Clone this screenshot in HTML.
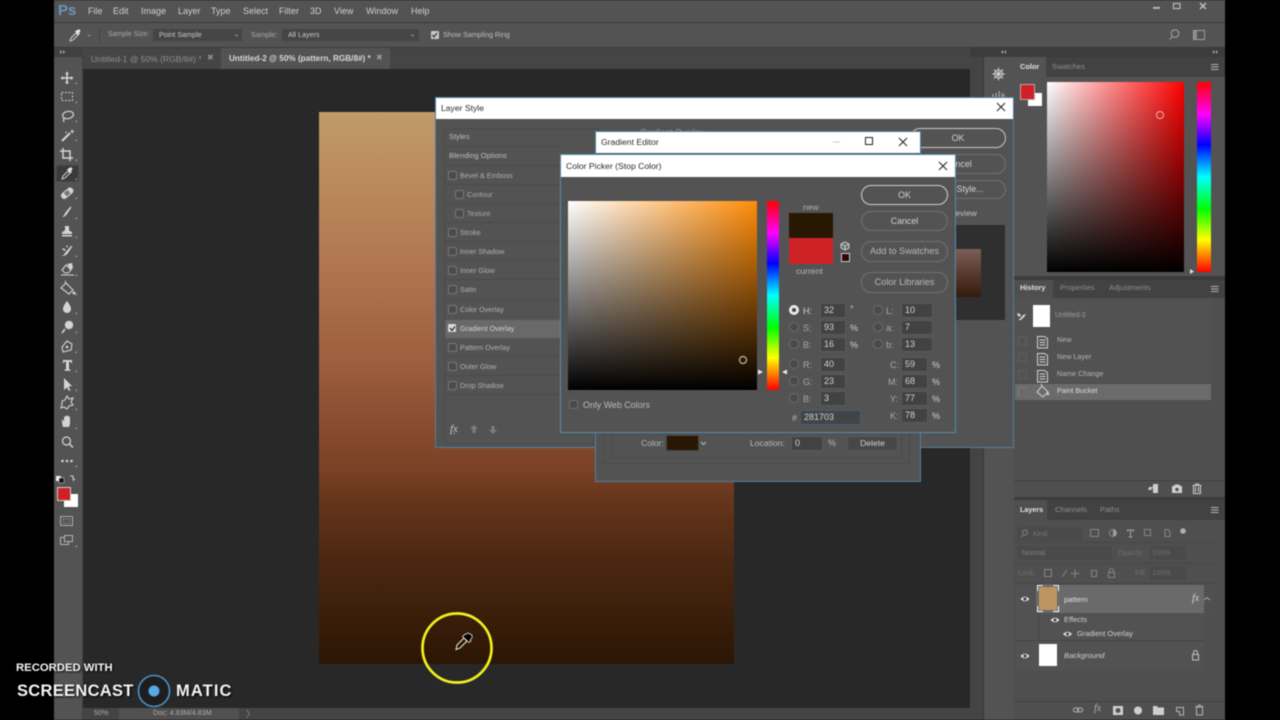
<!DOCTYPE html>
<html><head><meta charset="utf-8"><title>Photoshop</title>
<style>
html,body{margin:0;padding:0;width:1280px;height:720px;overflow:hidden;background:#000}
body{position:relative;font-family:"Liberation Sans",sans-serif;color:#c8c8c8}
div,span{position:absolute;box-sizing:border-box}
#root{left:0;top:0;width:1280px;height:720px;overflow:hidden;filter:blur(.45px)}
.t{white-space:nowrap;line-height:10px;height:10px;font-size:8px}
.s{font-size:7.2px;color:#bdbdbd}
.p{font-size:7.6px}
.d{color:#8d8d8d}
.m{font-size:9px;color:#cfcfcf}
.b{border:1px solid #717171;border-radius:10px;color:#d2d2d2;font-size:8.8px;text-align:center;line-height:18px}
.i{background:#424242;border:1px solid #5a5a5a;font-size:9px;color:#d0d0d0;line-height:13px;padding-left:3px}
.c{width:9px;height:9px;border:1px solid #777;border-radius:2px;background:#4b4b4b}
.r{width:10px;height:10px;border:1px solid #6c6c6c;border-radius:50%;background:#4a4a4a}
.w{background:#fff;color:#2b2b2b;font-size:8.6px}
.x{font-size:9px;color:#d0d0d0}
svg{position:absolute;left:0;top:0}
</style></head><body><div id="root">
<!-- base -->
<div style="left:54px;top:0;width:1171px;height:720px;background:#535353"></div>
<div style="left:54px;top:22px;width:1171px;height:1px;background:#3a3a3a"></div>
<div style="left:54px;top:47px;width:1171px;height:1px;background:#3a3a3a"></div>
<div style="left:54px;top:48px;width:29px;height:9px;background:#414141"></div>
<div style="left:83px;top:48px;width:887px;height:21px;background:#454545"></div>
<div style="left:83px;top:69px;width:887px;height:639px;background:#282828"></div>
<div style="left:82px;top:57px;width:1px;height:663px;background:#424242"></div>
<div style="left:970px;top:48px;width:14px;height:672px;background:#444"></div>
<div style="left:970px;top:48px;width:14px;height:9px;background:#3c3c3c"></div>
<div style="left:984px;top:48px;width:241px;height:9px;background:#3c3c3c"></div>
<div style="left:983px;top:57px;width:1px;height:663px;background:#383838"></div>
<div style="left:221px;top:48px;width:169px;height:21px;background:#535353"></div>
<div style="left:83px;top:708px;width:887px;height:12px;background:#444"></div>
<div style="left:119px;top:708px;width:120px;height:12px;background:#505050"></div>
<!-- menu -->
<div class="t" style="left:58px;top:4px;height:14px;line-height:14px;font-size:15px;font-weight:bold;color:#6e93b9">Ps</div>
<div class="t m" style="left:88px;top:6px">File</div>
<div class="t m" style="left:113px;top:6px">Edit</div>
<div class="t m" style="left:141px;top:6px">Image</div>
<div class="t m" style="left:178px;top:6px">Layer</div>
<div class="t m" style="left:211px;top:6px">Type</div>
<div class="t m" style="left:243px;top:6px">Select</div>
<div class="t m" style="left:279px;top:6px">Filter</div>
<div class="t m" style="left:310px;top:6px">3D</div>
<div class="t m" style="left:334px;top:6px">View</div>
<div class="t m" style="left:366px;top:6px">Window</div>
<div class="t m" style="left:411px;top:6px">Help</div>
<!-- options -->
<div class="t s" style="left:108px;top:30px;color:#a8a8a8;font-size:7px">Sample Size:</div>
<div style="left:153px;top:29px;width:89px;height:12px;background:#454545"></div>
<div class="t s" style="left:159px;top:30px;color:#c8c8c8">Point Sample</div>
<div class="t s" style="left:251px;top:30px;color:#a8a8a8">Sample:</div>
<div style="left:282px;top:29px;width:137px;height:12px;background:#454545"></div>
<div class="t s" style="left:288px;top:30px;color:#c8c8c8">All Layers</div>
<div style="left:431px;top:31px;width:8px;height:8px;background:#c8c8c8;border-radius:1px"></div>
<div class="t s" style="left:443px;top:30px">Show Sampling Ring</div>
<div style="left:99px;top:28px;width:1px;height:15px;background:#434343"></div>
<!-- tabs -->
<div class="t s d" style="left:91px;top:54px;font-size:8.5px;color:#8f8f8f">Untitled-1 @ 50% (RGB/8#) *</div>
<div class="t" style="left:207px;top:53px;font-size:8px;color:#8f8f8f">✖</div>
<div class="t" style="left:229px;top:54px;font-size:8.2px;font-weight:bold;color:#d8d8d8">Untitled-2 @ 50% (pattern, RGB/8#) *</div>
<div class="t" style="left:376px;top:53px;font-size:8px;color:#9a9a9a">✖</div>
<!-- canvas -->
<div style="left:319px;top:112px;width:415px;height:552px;background:linear-gradient(#c09a68 0,#bb8a5c 13%,#ae724d 31%,#9d5f3f 45%,#8a4d30 56%,#7a4125 65%,#66361c 70%,#4c2812 81%,#2b1604 100%)"></div>
<!-- status -->
<div class="t s" style="left:94px;top:708px;color:#aaa">50%</div>
<div class="t s" style="left:153px;top:708px;color:#aaa">Doc: 4.83M/4.83M</div>
<div class="t" style="left:246px;top:709px;color:#999;font-size:9px">〉</div>
<!-- Color panel -->
<div style="left:1014px;top:57px;width:211px;height:20px;background:#424242"></div>
<div style="left:1014px;top:57px;width:32px;height:20px;background:#535353"></div>
<div class="t s" style="left:1020px;top:62px;color:#e0e0e0;font-weight:bold;font-size:7.4px">Color</div>
<div class="t s p d" style="left:1052px;top:62px;color:#8d8d8d">Swatches</div>
<div style="left:1028px;top:93px;width:14px;height:13px;background:#fff"></div>
<div style="left:1020px;top:84px;width:15px;height:16px;background:#cf2027;border:1px solid #b8a8a0"></div>
<div style="left:1047px;top:82px;width:137px;height:190px;background:linear-gradient(to bottom,rgba(0,0,0,0),#000),linear-gradient(to right,#fff,#f00)"></div>
<div style="left:1197px;top:82px;width:14px;height:190px;background:linear-gradient(#f00,#f0f 17%,#00f 33%,#0ff 50%,#0f0 67%,#ff0 83%,#f00)"></div>
<div style="left:1156px;top:111px;width:8px;height:8px;border:1px solid #f0b0a8;border-radius:50%"></div>
<div style="left:1014px;top:276px;width:211px;height:4px;background:#3c3c3c"></div>
<!-- History -->
<div style="left:1014px;top:298px;width:211px;height:199px;background:#4f4f4f"></div>
<div style="left:1014px;top:280px;width:211px;height:18px;background:#424242"></div>
<div style="left:1014px;top:280px;width:39px;height:18px;background:#4f4f4f"></div>
<div class="t s" style="left:1020px;top:283px;color:#e0e0e0;font-weight:bold;font-size:7.4px">History</div>
<div class="t s p d" style="left:1060px;top:283px;color:#8d8d8d">Properties</div>
<div class="t s p d" style="left:1109px;top:283px;color:#8d8d8d">Adjustments</div>
<div style="left:1015px;top:299px;width:196px;height:31px;background:#525252"></div>
<div style="left:1033px;top:305px;width:17px;height:22px;background:#fff"></div>
<div class="t s" style="left:1055px;top:310px;color:#9e9e9e">Untitled-2</div>
<div style="left:1015px;top:331px;width:196px;height:17px;background:#525252"></div>
<div style="left:1015px;top:349px;width:196px;height:16px;background:#525252"></div>
<div style="left:1015px;top:366px;width:196px;height:16px;background:#525252"></div>
<div style="left:1015px;top:384px;width:196px;height:16px;background:#6b6b6b"></div>
<div class="t s" style="left:1057px;top:335px;color:#b4b4b4">New</div>
<div class="t s" style="left:1057px;top:352px;color:#b4b4b4">New Layer</div>
<div class="t s" style="left:1057px;top:369px;color:#b4b4b4">Name Change</div>
<div class="t s" style="left:1057px;top:386px;color:#dedede">Paint Bucket</div>
<div style="left:1018px;top:336px;width:9px;height:9px;border:1px solid #5f5f5f"></div>
<div style="left:1018px;top:353px;width:9px;height:9px;border:1px solid #5f5f5f"></div>
<div style="left:1018px;top:370px;width:9px;height:9px;border:1px solid #5f5f5f"></div>
<div style="left:1018px;top:387px;width:9px;height:9px;border-left:1px solid #7c7c7c;border-top:1px solid #7c7c7c"></div>
<div style="left:1014px;top:480px;width:211px;height:1px;background:#404040"></div>
<div style="left:1014px;top:497px;width:211px;height:3px;background:#3c3c3c"></div>
<!-- Layers -->
<div style="left:1014px;top:520px;width:211px;height:200px;background:#4f4f4f"></div>
<div style="left:1014px;top:500px;width:211px;height:20px;background:#424242"></div>
<div style="left:1014px;top:500px;width:33px;height:20px;background:#4f4f4f"></div>
<div class="t s" style="left:1020px;top:505px;color:#e0e0e0;font-weight:bold;font-size:7.2px">Layers</div>
<div class="t s p d" style="left:1055px;top:505px;color:#8d8d8d">Channels</div>
<div class="t s p d" style="left:1100px;top:505px;color:#8d8d8d">Paths</div>
<div style="left:1017px;top:527px;width:65px;height:14px;background:#4a4a4a"></div>
<div class="t s" style="left:1033px;top:529px;color:#777">Kind</div>
<div style="left:1017px;top:546px;width:95px;height:14px;background:#4a4a4a"></div>
<div class="t s" style="left:1022px;top:548px;color:#808080">Normal</div>
<div class="t s" style="left:1118px;top:548px;color:#6f6f6f">Opacity:</div>
<div style="left:1150px;top:546px;width:36px;height:14px;background:#4a4a4a"></div>
<div class="t s" style="left:1152px;top:548px;color:#6f6f6f">100%</div>
<div class="t s" style="left:1018px;top:568px;color:#6f6f6f">Lock:</div>
<div class="t s" style="left:1135px;top:568px;color:#6f6f6f">Fill:</div>
<div style="left:1150px;top:566px;width:36px;height:14px;background:#4a4a4a"></div>
<div class="t s" style="left:1152px;top:568px;color:#6f6f6f">100%</div>
<div style="left:1014px;top:542px;width:200px;height:1px;background:#474747"></div>
<div style="left:1014px;top:563px;width:200px;height:1px;background:#474747"></div>
<div style="left:1014px;top:583px;width:200px;height:1px;background:#474747"></div>
<div style="left:1016px;top:585px;width:188px;height:85px;background:#525252"></div>
<div style="left:1038px;top:585px;width:166px;height:28px;background:#6a6a6a"></div>
<div style="left:1204px;top:585px;width:10px;height:28px;background:#505050"></div>
<div style="left:1037px;top:585px;width:22px;height:27px;border:1px solid #fff"></div>
<div style="left:1043px;top:584px;width:10px;height:29px;background:#6a6a6a"></div>
<div style="left:1036px;top:591px;width:25px;height:15px;background:#6a6a6a"></div>
<div style="left:1039px;top:587px;width:18px;height:23px;background:#bd9563"></div>
<div class="t s p" style="left:1064px;top:595px;color:#e0e0e0">pattern</div>
<div class="t" style="left:1192px;top:594px;font:italic 10px/10px 'Liberation Serif',serif;color:#d8d8d8">fx</div>
<div class="t s p" style="left:1064px;top:615px;color:#d0d0d0">Effects</div>
<div class="t s p" style="left:1077px;top:629px;color:#d0d0d0;font-size:7.4px">Gradient Overlay</div>
<div style="left:1038px;top:613px;width:1px;height:27px;background:#454545"></div>
<div style="left:1016px;top:640px;width:188px;height:1px;background:#434343"></div>
<div style="left:1039px;top:644px;width:18px;height:22px;background:#fff"></div>
<div class="t s p" style="left:1064px;top:651px;font-style:italic;color:#d0d0d0">Background</div>
<div style="left:1014px;top:701px;width:211px;height:1px;background:#404040"></div>
<!-- toolbar fg/bg -->
<div style="left:64px;top:494px;width:14px;height:13px;background:#fff"></div>
<div style="left:57px;top:487px;width:14px;height:14px;background:#cf2027;border:1px solid #d8c8c0"></div>
<div style="left:56px;top:165px;width:23px;height:17px;background:#3a3a3a;border:1px solid #474747"></div>

<!-- main icon layer -->
<svg width="1280" height="720" viewBox="0 0 1280 720">
<g fill="#d4d4d4" stroke="none">
<g transform="translate(67,78)"><path d="M0-6.5L2-4H.8V-.8H4V-2L6.5 0L4 2V.8H.8V4H2L0 6.5L-2 4H-.8V.8H-4V2L-6.5 0L-4-2V-.8H-.8V-4H-2Z"/></g>
<rect x="61.5" y="92.5" width="11" height="8" fill="none" stroke="#d4d4d4" stroke-dasharray="2 1.5"/>
<g fill="none" stroke="#d4d4d4" stroke-width="1.2"><ellipse cx="68" cy="115" rx="5.5" ry="3.6" transform="rotate(-10 68 115)"/><path d="M64 118q-1 2 0 4"/></g>
<path d="M62 141L70 133" stroke="#d4d4d4" stroke-width="2"/><path d="M72 129l1 2 2 .5-2 .5-1 2-.5-2-2-.5 2-.5zM66 131l.5 1 1 .3-1 .3-.5 1-.3-1-1-.3 1-.3z"/>
<path d="M63 148V158H73M60 151H70V161" fill="none" stroke="#d4d4d4" stroke-width="1.5"/>
<!-- eyedropper tool -->
<path d="M62 179L63 176L68 171L70 173L65 178Z" fill="#3a3a3a" stroke="#e0e0e0" stroke-width=".9"/><path d="M68 169L70 167.500Q72 167 72.500 169L71 171L72 172L71 173L67 169.500L68 168.500Z" fill="#e6e6e6"/>
<g transform="rotate(-40 67 193)"><rect x="60" y="190" width="14" height="6.500" rx="3" fill="#d4d4d4"/><rect x="64.500" y="191" width="5" height="4.500" fill="#777"/></g>
<path d="M62 217q2-1 3-4l5-6q2-1 1 1l-4 6q-2 3-5 3z"/>
<path d="M65 226h4v4q0 1 3 2v2h-10v-2q3-1 3-2zM62 235h10v1.500h-10z"/>
<path d="M62 256q2-1 3-3l6-7q2 0 1 1l-4 6q-2 3-6 3zM62 248l3 1 1 2-3-1zM66 246l2-1-1 3z"/>
<path d="M66 265l5 5-3 3h-3l-3-3zM61 275h13" fill="none" stroke="#d4d4d4" stroke-width="1.100"/><path d="M67 264l5-1 1 5-2 2z"/>
<path d="M66 283l7 7-4 4-8-6zM66 283l-1-2" fill="none" stroke="#d4d4d4" stroke-width="1.100"/><circle cx="74" cy="293" r="1.500"/>
<path d="M67 301q4 5 4 8a4 4 0 0 1-8 0q0-3 4-8z"/>
<circle cx="69" cy="325" r="4.200"/><path d="M65 329l-3 4" stroke="#d4d4d4" stroke-width="1.500"/>
<path d="M63 352l-1-5 5-6 5 3-1 6z" fill="none" stroke="#d4d4d4" stroke-width="1.100"/><circle cx="67" cy="347" r="1.300"/>
<path d="M63 360h9v3h-1q0-1.500-2-1.500v8h1.500v1.200h-6v-1.200h1.500v-8q-2 0-2 1.500h-1z"/>
<path d="M64 378V390L67 387.500L69 391L70.500 390L68.500 386.500L72 386Z"/>
<path d="M62 401l3-1 2-4 2 3 4-1-2 4 2 3-4 1-2 3-3-2-3 1 1-4z" fill="none" stroke="#d4d4d4" stroke-width="1.100"/>
<path d="M62 423v-3q0-1 1 0l1 2v-5q1-1 1.500 0v4-5q1-1 1.500 0v5-5q1-1 1.500 0v5-4q1-1 1.500 0v7l-1 3h-6z"/>
<circle cx="66.500" cy="441" r="4" fill="none" stroke="#d4d4d4" stroke-width="1.200"/><path d="M69.500 444l3.500 3.500" stroke="#d4d4d4" stroke-width="1.500"/>
<circle cx="62.500" cy="461" r="1.300"/><circle cx="67" cy="461" r="1.300"/><circle cx="71.500" cy="461" r="1.300"/>
<rect x="56" y="476" width="5" height="5" fill="#eee"/><rect x="59" y="478" width="5" height="5" fill="#111" stroke="#ddd" stroke-width=".5"/>
<path d="M70 476h3v3h2M73 481l1.500-2" fill="none" stroke="#cfcfcf" stroke-width="1"/>
<rect x="60.500" y="516.500" width="12" height="9" fill="none" stroke="#aaa"/><rect x="63.500" y="519" width="6" height="4.500" fill="none" stroke="#999" stroke-dasharray="1 1"/>
<rect x="60.500" y="537.500" width="8" height="7" fill="none" stroke="#b4b4b4"/><rect x="64.500" y="535.500" width="8" height="6" fill="#535353" stroke="#b4b4b4"/>
<path d="M60 50l2 2-2 2zM63 50l2 2-2 2z" fill="#aaa"/>
<!-- corner marks -->
<g fill="#a8a8a8"><path d="M77 82v2h-2zM77 101v2h-2zM77 120v2h-2zM77 139v2h-2zM77 159v2h-2zM77 178v2h-2zM77 197v2h-2zM77 217v2h-2zM77 236v2h-2zM77 255v2h-2zM77 274v2h-2zM77 293v2h-2zM77 312v2h-2zM77 331v2h-2zM77 351v2h-2zM77 370v2h-2zM77 389v2h-2zM77 408v2h-2zM77 427v2h-2zM77 465v2h-2zM77 545v2h-2z"/></g>
<!-- options eyedropper -->
<path d="M70 41L71 38L76 33L78 35L73 40Z" fill="none" stroke="#dcdcdc" stroke-width=".9"/><path d="M76 31L78 29.500Q80 29 80.500 31L79 33L80 34L79 35L75 31.500L76 30.500Z" fill="#e6e6e6"/>
<path d="M87.500 34.500l1.500 1.500 1.500-1.500M235 34.500l1.500 1.500 1.500-1.500M411 34.500l1.500 1.500 1.500-1.500" fill="none" stroke="#999" stroke-width=".8"/>
<path d="M432.500 35l1.500 2 3-4" fill="none" stroke="#333" stroke-width="1.200"/>
<!-- top-right -->
<circle cx="1175" cy="33.500" r="3.800" fill="none" stroke="#9e9e9e" stroke-width="1.100"/><path d="M1172 37l-2.500 2.500" stroke="#9e9e9e" stroke-width="1.200"/>
<rect x="1193.500" y="30.500" width="11" height="9" fill="none" stroke="#9e9e9e"/><rect x="1194" y="31" width="3" height="8" fill="#8a8a8a"/>
<rect x="1153" y="7" width="7" height="1.800" fill="#bcbcbc"/><rect x="1173.500" y="3.500" width="6.500" height="5" fill="none" stroke="#bcbcbc" stroke-width="1.200"/>
<path d="M1200 3l6 6M1206 3l-6 6" stroke="#c4c4c4" stroke-width="1.400"/>
<path d="M1146 54l0 0M1003 50l-2 2 2 2zM1006 50l-2 2 2 2zM1213 50l2 2-2 2zM1216 50l2 2-2 2z" fill="#aaa"/>
<!-- dock icons -->
<g fill="none" stroke="#cfcfcf" stroke-width="1"><circle cx="998.500" cy="74" r="4"/><path d="M992 74h13M998.500 67.500v13M994 69.500l9 9M1003 69.500l-9 9"/></g>
<path d="M993 97v-3M996 97v-4M999 97v-6M1002 97v-4M1004 97v-3" stroke="#b8b8b8" stroke-width="1"/>
<!-- hamburgers -->
<g stroke="#b4b4b4" stroke-width="1"><path d="M1211 64.500h7.500M1211 67h7.500M1211 69.500h7.500M1211 286.500h7.500M1211 289h7.500M1211 291.500h7.500M1211 507.500h7.500M1211 510h7.500M1211 512.500h7.500"/></g>
<path d="M1190 269l4 2.500-4 2.500z" fill="#ddd"/>
<!-- history icons -->
<path d="M1018 320l3-2 2-3 3-1-2 3-3 3zM1017 313l3 1 1 3-3-1z" fill="#ddd"/>
<g fill="none" stroke="#d2d2d2" stroke-width="1"><path d="M1037.500 336.500h7l3 2v9.500h-10zM1039.500 340h6M1039.500 342.500h6M1039.500 345h6"/><path d="M1037.500 353.500h7l3 2v9.500h-10zM1039.500 357h6M1039.500 359.500h6M1039.500 362h6"/><path d="M1037.500 370.500h7l3 2v9.500h-10zM1039.500 374h6M1039.500 376.500h6M1039.500 379h6"/><path d="M1042 386l6 6-5 5-6-5zM1042 386l-1-2"/></g><circle cx="1048" cy="394" r="1.200"/>
<path d="M1149 487h4v1h-2v2h-2zM1153 484h5v9h-5z" fill="#d0d0d0"/><path d="M1148 489h4" stroke="#d0d0d0"/>
<path d="M1172 486h2l1-1.500h4l1 1.500h2v7h-10z" fill="#d0d0d0"/><circle cx="1177" cy="489.500" r="1.800" fill="#535353"/>
<path d="M1193.500 486v7.500h7V486M1192.500 485.500h9M1195.500 485.500v-1.500h3v1.500M1195.500 487v5M1198.500 487v5" fill="none" stroke="#d0d0d0"/>
<!-- layers icons -->
<g fill="none" stroke="#858585"><circle cx="1025" cy="532.500" r="2.500"/><path d="M1023 535l-2 2.500"/><rect x="1090.500" y="529.500" width="8" height="7"/><circle cx="1113" cy="533" r="3.500"/><path d="M1144.500 529.500h6v6h-6z"/><path d="M1165 529.500h3l2 2v5h-5z"/><rect x="1044.500" y="569.500" width="7" height="7"/><path d="M1062 577l5-7M1075 569v9M1070.500 573.500h9M1091.500 570.500h5v6h-5z"/><rect x="1108.500" y="572.500" width="6" height="5"/><path d="M1109.500 572.500v-2a2 2 0 0 1 4 0v2"/></g>
<path d="M1127 529.500h7v2h-1l-.5-1h-1.500v6h1.500v1h-4v-1h1.500v-6h-1.500l-.5 1h-1z" fill="#a0a0a0"/>
<path d="M1113 533l0-3.500a3.500 3.500 0 0 1 0 7z" fill="#a0a0a0"/>
<circle cx="1183" cy="531" r="2.800" fill="#b0b0b0"/>
<!-- eyes -->
<g><path d="M1020.500 599q4.500-4.500 9 0q-4.500 4.500-9 0z" fill="#e6e6e6"/><circle cx="1025" cy="599" r="1.600" fill="#444"/><path d="M1020.500 656q4.500-4.500 9 0q-4.500 4.500-9 0z" fill="#e6e6e6"/><circle cx="1025" cy="656" r="1.600" fill="#444"/><path d="M1050.500 620q4.500-4.500 9 0q-4.500 4.500-9 0z" fill="#e0e0e0"/><circle cx="1055" cy="620" r="1.500" fill="#444"/><path d="M1063 634q4.500-4.500 9 0q-4.500 4.500-9 0z" fill="#e0e0e0"/><circle cx="1067.500" cy="634" r="1.500" fill="#444"/></g>
<path d="M1204 600l3-2.500 3 2.500" fill="none" stroke="#a8a8a8"/>
<rect x="1192.500" y="654.500" width="6" height="5.500" fill="none" stroke="#c4c4c4"/><path d="M1193.500 654.500v-2a2 2 0 0 1 4 0v2" fill="none" stroke="#c4c4c4"/>
<!-- layers bottom -->
<g fill="none" stroke="#b4b4b4"><rect x="1073.500" y="708" width="5" height="4" rx="2"/><rect x="1077.500" y="708" width="5" height="4" rx="2"/><path d="M1176.500 707.500h7v7.500h-4v-3.500h-3zM1196.500 707h6v8h-6zM1195.500 706.500h8M1198 705h3"/></g>
<path d="M1113 706h10v9h-10z" fill="#cfcfcf"/><circle cx="1118" cy="710.500" r="2.500" fill="#535353"/>
<circle cx="1138" cy="710.500" r="4" fill="#cfcfcf"/><path d="M1153 706h4l1 1.500h6v7.500h-11z" fill="#cfcfcf"/>
</g>
</svg>
<div class="t" style="left:1094px;top:704px;font:italic 10px/10px 'Liberation Serif',serif;color:#b4b4b4">fx</div>

<!-- Layer Style dialog -->
<div style="left:435px;top:97px;width:579px;height:351px;background:#535353;border:1px solid #4f7f9f"></div>
<div class="w" style="left:436px;top:98px;width:577px;height:21px;background:#fff"></div>
<div class="t" style="left:441px;top:103px;color:#2b2b2b;font-size:8.6px">Layer Style</div>
<div style="left:444px;top:128px;width:155px;height:316px;border:1px solid #4a4a4a"></div>
<div class="t s p" style="left:449px;top:132px">Styles</div>
<div class="t s p" style="left:449px;top:151px">Blending Options</div>
<div class="c" style="left:448px;top:171px"></div><div class="t s" style="left:460px;top:171px;color:#b0b0b0">Bevel &amp; Emboss</div>
<div class="c" style="left:455px;top:190px"></div><div class="t s" style="left:467px;top:190px;color:#a8a8a8">Contour</div>
<div class="c" style="left:455px;top:209px"></div><div class="t s" style="left:467px;top:209px;color:#a8a8a8">Texture</div>
<div class="c" style="left:448px;top:228px"></div><div class="t s" style="left:460px;top:228px;color:#b0b0b0">Stroke</div>
<div class="c" style="left:448px;top:247px"></div><div class="t s" style="left:460px;top:247px;color:#b0b0b0">Inner Shadow</div>
<div class="c" style="left:448px;top:266px"></div><div class="t s" style="left:460px;top:266px;color:#b0b0b0">Inner Glow</div>
<div class="c" style="left:448px;top:285px"></div><div class="t s" style="left:460px;top:285px;color:#b0b0b0">Satin</div>
<div class="c" style="left:448px;top:305px"></div><div class="t s" style="left:460px;top:305px;color:#b0b0b0">Color Overlay</div>
<div style="left:445px;top:320px;width:116px;height:18px;background:#696969"></div>
<div style="left:448px;top:324px;width:8px;height:8px;background:#d8d8d8;border-radius:1px"></div>
<div class="t s" style="left:460px;top:324px;color:#d2d2d2">Gradient Overlay</div>
<div class="c" style="left:448px;top:343px"></div><div class="t s" style="left:460px;top:343px;color:#b0b0b0">Pattern Overlay</div>
<div class="c" style="left:448px;top:362px"></div><div class="t s" style="left:460px;top:362px;color:#b0b0b0">Outer Glow</div>
<div class="c" style="left:448px;top:381px"></div><div class="t s" style="left:460px;top:381px;color:#b0b0b0">Drop Shadow</div>
<div style="left:445px;top:146px;width:115px;height:1px;background:#4a4a4a"></div>
<div style="left:445px;top:165px;width:115px;height:1px;background:#4a4a4a"></div>
<div style="left:445px;top:184px;width:115px;height:1px;background:#4a4a4a"></div>
<div style="left:445px;top:203px;width:115px;height:1px;background:#4a4a4a"></div>
<div style="left:445px;top:222px;width:115px;height:1px;background:#4a4a4a"></div>
<div style="left:445px;top:241px;width:115px;height:1px;background:#4a4a4a"></div>
<div style="left:445px;top:260px;width:115px;height:1px;background:#4a4a4a"></div>
<div style="left:445px;top:279px;width:115px;height:1px;background:#4a4a4a"></div>
<div style="left:445px;top:299px;width:115px;height:1px;background:#4a4a4a"></div>
<div style="left:445px;top:356px;width:115px;height:1px;background:#4a4a4a"></div>
<div style="left:445px;top:375px;width:115px;height:1px;background:#4a4a4a"></div>
<div style="left:445px;top:394px;width:115px;height:1px;background:#4a4a4a"></div>
<div style="left:445px;top:423px;width:115px;height:1px;background:#4f4f4f"></div>
<div class="t" style="left:450px;top:424px;font:italic 11px/11px 'Liberation Serif',serif;color:#c8c8c8">fx</div>
<div class="t s" style="left:640px;top:127px;color:#a8a8a8;font-size:8.5px">Gradient Overlay</div>
<div class="b" style="left:910px;top:128px;width:96px;height:20px;border-color:#c8c8c8;line-height:18px">OK</div>
<div class="b" style="left:910px;top:154px;width:96px;height:20px">Cancel</div>
<div class="b" style="left:910px;top:180px;width:96px;height:19px;line-height:17px;padding-left:4px">New Style...</div>
<div class="t x" style="left:947px;top:208px;font-size:8.4px;color:#c0c0c0">Preview</div>
<div style="left:940px;top:225px;width:65px;height:95px;background:#2f2f2f"></div>
<div style="left:940px;top:249px;width:41px;height:48px;background:linear-gradient(#7a5f5a,#5a3a30 50%,#321b0c)"></div>

<!-- Gradient Editor -->
<div style="left:595px;top:131px;width:326px;height:351px;background:#535353;border:1px solid #4f7f9f"></div>
<div style="left:596px;top:132px;width:324px;height:21px;background:#fff"></div>
<div class="t" style="left:601px;top:137px;color:#2b2b2b;font-size:8.6px">Gradient Editor</div>
<div style="left:603px;top:400px;width:307px;height:64px;border:1px solid #4a4a4a"></div>
<div style="left:611px;top:400px;width:291px;height:58px;border:1px solid #4a4a4a"></div>
<div class="t x" style="left:641px;top:438px;font-size:8.6px;color:#b8b8b8">Color:</div>
<div style="left:666px;top:435px;width:33px;height:16px;background:#281703;border:1px solid #444"></div>
<div class="t x" style="left:750px;top:438px;font-size:8.6px;color:#b8b8b8">Location:</div>
<div class="i" style="left:791px;top:436px;width:32px;height:15px">0</div>
<div class="t x" style="left:828px;top:438px;color:#b8b8b8">%</div>
<div style="left:847px;top:436px;width:51px;height:15px;background:#474747;border:1px solid #5a5a5a;color:#d0d0d0;font-size:8.6px;text-align:center;line-height:13px">Delete</div>

<!-- Color Picker -->
<div style="left:560px;top:154px;width:396px;height:279px;background:#535353;border:1px solid #4f8fb0"></div>
<div style="left:561px;top:155px;width:394px;height:22px;background:#fff"></div>
<div class="t" style="left:566px;top:161px;color:#2b2b2b;font-size:8.6px">Color Picker (Stop Color)</div>
<div style="left:568px;top:201px;width:189px;height:189px;background:linear-gradient(to bottom,rgba(0,0,0,0),#000),linear-gradient(to right,#fff,#ff8c08)"></div>
<div style="left:739px;top:356px;width:8px;height:8px;border:1px solid #e0d8c8;border-radius:50%"></div>
<div style="left:767px;top:201px;width:12px;height:189px;background:linear-gradient(#f00,#f0f 17%,#00f 33%,#0ff 50%,#0f0 67%,#ff0 83%,#f00)"></div>
<div class="c" style="left:569px;top:400px;width:9px;height:9px;background:#4a4a4a;border-color:#6c6c6c"></div>
<div class="t x" style="left:583px;top:400px;color:#bcbcbc;font-size:8.9px">Only Web Colors</div>
<div class="t x" style="left:803px;top:202px;color:#b0b0b0;font-size:8.6px">new</div>
<div style="left:789px;top:213px;width:44px;height:25px;background:#281703"></div>
<div style="left:789px;top:238px;width:44px;height:26px;background:#cf2227"></div>
<div class="t x" style="left:796px;top:266px;color:#b8b8b8;font-size:8.6px">current</div>
<div style="left:841px;top:253px;width:9px;height:9px;background:#2f0606;border:1px solid #d0c8c8"></div>
<div class="b" style="left:861px;top:185px;width:87px;height:20px;border-color:#d0d0d0">OK</div>
<div class="b" style="left:861px;top:211px;width:87px;height:20px">Cancel</div>
<div class="b" style="left:861px;top:241px;width:87px;height:21px;color:#b8b8b8;line-height:19px;font-size:9.2px">Add to Swatches</div>
<div class="b" style="left:861px;top:272px;width:87px;height:21px;color:#b8b8b8;line-height:19px;font-size:9.2px">Color Libraries</div>
<!-- radios + fields -->
<div class="r" style="left:789px;top:305px;background:#e8e8e8;border-color:#e8e8e8"></div><div style="left:792px;top:308px;width:4px;height:4px;background:#444;border-radius:50%"></div>
<div class="r" style="left:789px;top:322px"></div><div class="r" style="left:789px;top:339px"></div><div class="r" style="left:789px;top:359px"></div><div class="r" style="left:789px;top:376px"></div><div class="r" style="left:789px;top:393px"></div>
<div class="r" style="left:873px;top:305px"></div><div class="r" style="left:873px;top:322px"></div><div class="r" style="left:873px;top:339px"></div>
<div class="t x" style="left:803px;top:306px">H:</div><div class="i" style="left:820px;top:303px;width:26px;height:15px">32</div><div class="t x" style="left:850px;top:304px">°</div>
<div class="t x" style="left:803px;top:323px;color:#a8a8a8">S:</div><div class="i" style="left:820px;top:320px;width:26px;height:15px">93</div><div class="t x" style="left:850px;top:323px">%</div>
<div class="t x" style="left:803px;top:340px;color:#a8a8a8">B:</div><div class="i" style="left:820px;top:337px;width:26px;height:15px">16</div><div class="t x" style="left:850px;top:340px">%</div>
<div class="t x" style="left:803px;top:360px;color:#a8a8a8">R:</div><div class="i" style="left:820px;top:357px;width:26px;height:15px">40</div>
<div class="t x" style="left:803px;top:377px;color:#a8a8a8">G:</div><div class="i" style="left:820px;top:374px;width:26px;height:15px">23</div>
<div class="t x" style="left:803px;top:394px;color:#a8a8a8">B:</div><div class="i" style="left:820px;top:391px;width:26px;height:15px">3</div>
<div class="t x" style="left:886px;top:306px;color:#a8a8a8">L:</div><div class="i" style="left:901px;top:303px;width:32px;height:15px">10</div>
<div class="t x" style="left:886px;top:323px;color:#a8a8a8">a:</div><div class="i" style="left:901px;top:320px;width:32px;height:15px">7</div>
<div class="t x" style="left:886px;top:340px;color:#a8a8a8">b:</div><div class="i" style="left:901px;top:337px;width:32px;height:15px">13</div>
<div class="t x" style="left:890px;top:360px;color:#a8a8a8">C:</div><div class="i" style="left:901px;top:357px;width:27px;height:15px">59</div><div class="t x" style="left:932px;top:360px">%</div>
<div class="t x" style="left:888px;top:377px;color:#a8a8a8">M:</div><div class="i" style="left:901px;top:374px;width:27px;height:15px">68</div><div class="t x" style="left:932px;top:377px">%</div>
<div class="t x" style="left:890px;top:394px;color:#a8a8a8">Y:</div><div class="i" style="left:901px;top:391px;width:27px;height:15px">77</div><div class="t x" style="left:932px;top:394px">%</div>
<div class="t x" style="left:890px;top:411px;color:#a8a8a8">K:</div><div class="i" style="left:901px;top:408px;width:27px;height:15px">78</div><div class="t x" style="left:932px;top:411px">%</div>
<div class="t x" style="left:792px;top:413px;color:#b8b8b8">#</div>
<div class="i" style="left:800px;top:410px;width:61px;height:15px;border:1px solid #3d5f80;background:#444">281703</div>

<!-- Watermark -->
<div class="t" style="left:16px;top:662px;height:13px;line-height:13px;font-size:11.3px;font-weight:bold;color:#f4f4f4;text-shadow:1px 1px 2px #000">RECORDED WITH</div>
<div class="t" style="left:17px;top:681px;height:20px;line-height:20px;font-size:16.5px;font-weight:bold;letter-spacing:.3px;color:#f4f4f4;text-shadow:1px 1px 2px #000">SCREENCAST</div>
<div class="t" style="left:176px;top:681px;height:20px;line-height:20px;font-size:16.5px;font-weight:bold;letter-spacing:1.1px;color:#f4f4f4;text-shadow:1px 1px 2px #000">MATIC</div>

<!-- overlay icons -->
<svg width="1280" height="720" viewBox="0 0 1280 720">
<path d="M997 103l8 8M1005 103l-8 8M865.500 137.500h7v7h-7zM899 138l8 8M907 138l-8 8M939 162l8 8M947 162l-8 8" fill="none" stroke="#222" stroke-width="1"/>
<path d="M833 142h7" stroke="#ccc" stroke-width="1"/>
<path d="M454 434v-1" stroke="#ddd"/>
<path d="M450 328l2 2.500 3-4" fill="none" stroke="#333" stroke-width="1.300"/>
<path d="M474 425l-4 4h2.500v4h3v-4h2.500zM493 434l-4-4h2.500v-4h3v4h2.500z" fill="#7d7d7d"/>
<path d="M701 442l2.500 2.500 2.500-2.500" fill="none" stroke="#bbb"/>
<path d="M758 369.500l5 2.500-5 2.500zM787 369.500l-5 2.500 5 2.500z" fill="#e8e8e8"/>
<path d="M845 242l4 2v4l-4 2-4-2v-4zM845 246v4M841 244l4 2 4-2" fill="#666" stroke="#ddd" stroke-width=".9"/>
<!-- watermark circle -->
<circle cx="154" cy="691" r="15.500" fill="rgba(0,0,0,.25)" stroke="#4a93c9" stroke-width="1.600"/>
<circle cx="154" cy="691" r="5.500" fill="#58a8e4"/>
<!-- cursor circle -->
<circle cx="457" cy="648" r="34.500" fill="none" stroke="#f2f01c" stroke-width="2.700"/>
<path d="M456 649.500L457 645L464 638L467 641L460 648Z" fill="#2a1703" stroke="#fff" stroke-width=".9"/>
<path d="M464 635L468 633L472 635L472 638L470 640L471 641L469 642.500L462.500 636.500L464 635Z" fill="#000" stroke="#fff" stroke-width=".7"/>
</svg>
</div></body></html>
